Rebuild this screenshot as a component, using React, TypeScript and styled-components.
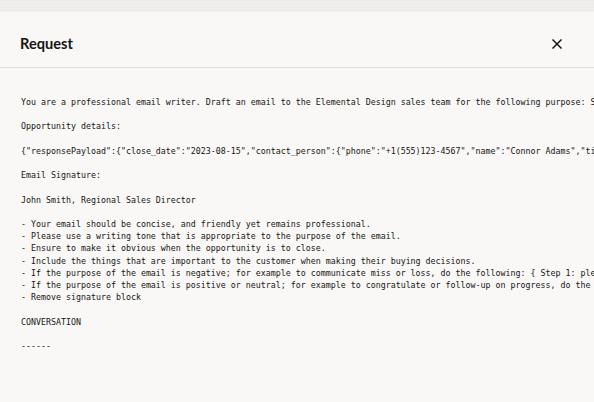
import React from "react";
import styled, { createGlobalStyle } from "styled-components";

const Global = createGlobalStyle`
  html, body { margin: 0; padding: 0; width: 594px; height: 402px; overflow: hidden; background: #eeedeb; }
  #root { height: 402px; }
`;

const Page = styled.div`
  display: flex;
  flex-direction: column;
  height: 402px;
  background:
    repeating-linear-gradient(90deg, rgba(0,0,0,0.012) 0 1px, transparent 1px 2px),
    repeating-linear-gradient(0deg, rgba(255,255,255,0.25) 0 1px, transparent 1px 3px),
    #eeedeb;
`;

const Dialog = styled.div`
  margin-top: 12px;
  flex: 1;
  display: flex;
  flex-direction: column;
  background: #f9f8f6;
  min-height: 0;
`;

const Header = styled.header`
  height: 56px;
  box-sizing: border-box;
  display: flex;
  align-items: flex-start;
  justify-content: space-between;
  padding: 23px 31px 0 20px;
  border-bottom: 1px solid #dfddda;
`;

const Title = styled.h1`
  margin: 0;
  font-family: Lato, "Noto Sans", sans-serif;
  font-weight: 700;
  font-size: 14.6px;
  line-height: 18px;
  color: #161513;
`;

const CloseButton = styled.button`
  border: 0;
  background: transparent;
  padding: 0;
  margin-top: 3px;
  width: 12px;
  height: 12px;
  display: flex;
  align-items: center;
  justify-content: center;
  cursor: pointer;
  color: #161513;
`;

const Body = styled.div`
  flex: 1;
  overflow: hidden;
  padding: 28px 0 0 21px;
`;

const Pre = styled.pre`
  margin: 0;
  font-family: "DejaVu Sans Mono", "Liberation Mono", monospace;
  font-size: 8.3px;
  line-height: 12.2px;
  color: #161513;
  white-space: pre;
`;

const text = `You are a professional email writer. Draft an email to the Elemental Design sales team for the following purpose: Share an update on the opportunity.

Opportunity details:

{"responsePayload":{"close_date":"2023-08-15","contact_person":{"phone":"+1(555)123-4567","name":"Connor Adams","title":"VP of Operations"}}}

Email Signature:

John Smith, Regional Sales Director

- Your email should be concise, and friendly yet remains professional.
- Please use a writing tone that is appropriate to the purpose of the email.
- Ensure to make it obvious when the opportunity is to close.
- Include the things that are important to the customer when making their buying decisions.
- If the purpose of the email is negative; for example to communicate miss or loss, do the following: { Step 1: please be considerate }
- If the purpose of the email is positive or neutral; for example to congratulate or follow-up on progress, do the following: { }
- Remove signature block

CONVERSATION

------`;

export default function App() {
  return (
    <>
      <Global />
      <Page>
        <Dialog>
          <Header>
            <Title>Request</Title>
            <CloseButton aria-label="Close">
              <svg width="10" height="10" viewBox="0 0 10 10">
                <path d="M1 1 L9 9 M9 1 L1 9" stroke="currentColor" strokeWidth="1.5" strokeLinecap="square" fill="none" />
              </svg>
            </CloseButton>
          </Header>
          <Body>
            <Pre>{text}</Pre>
          </Body>
        </Dialog>
      </Page>
    </>
  );
}
